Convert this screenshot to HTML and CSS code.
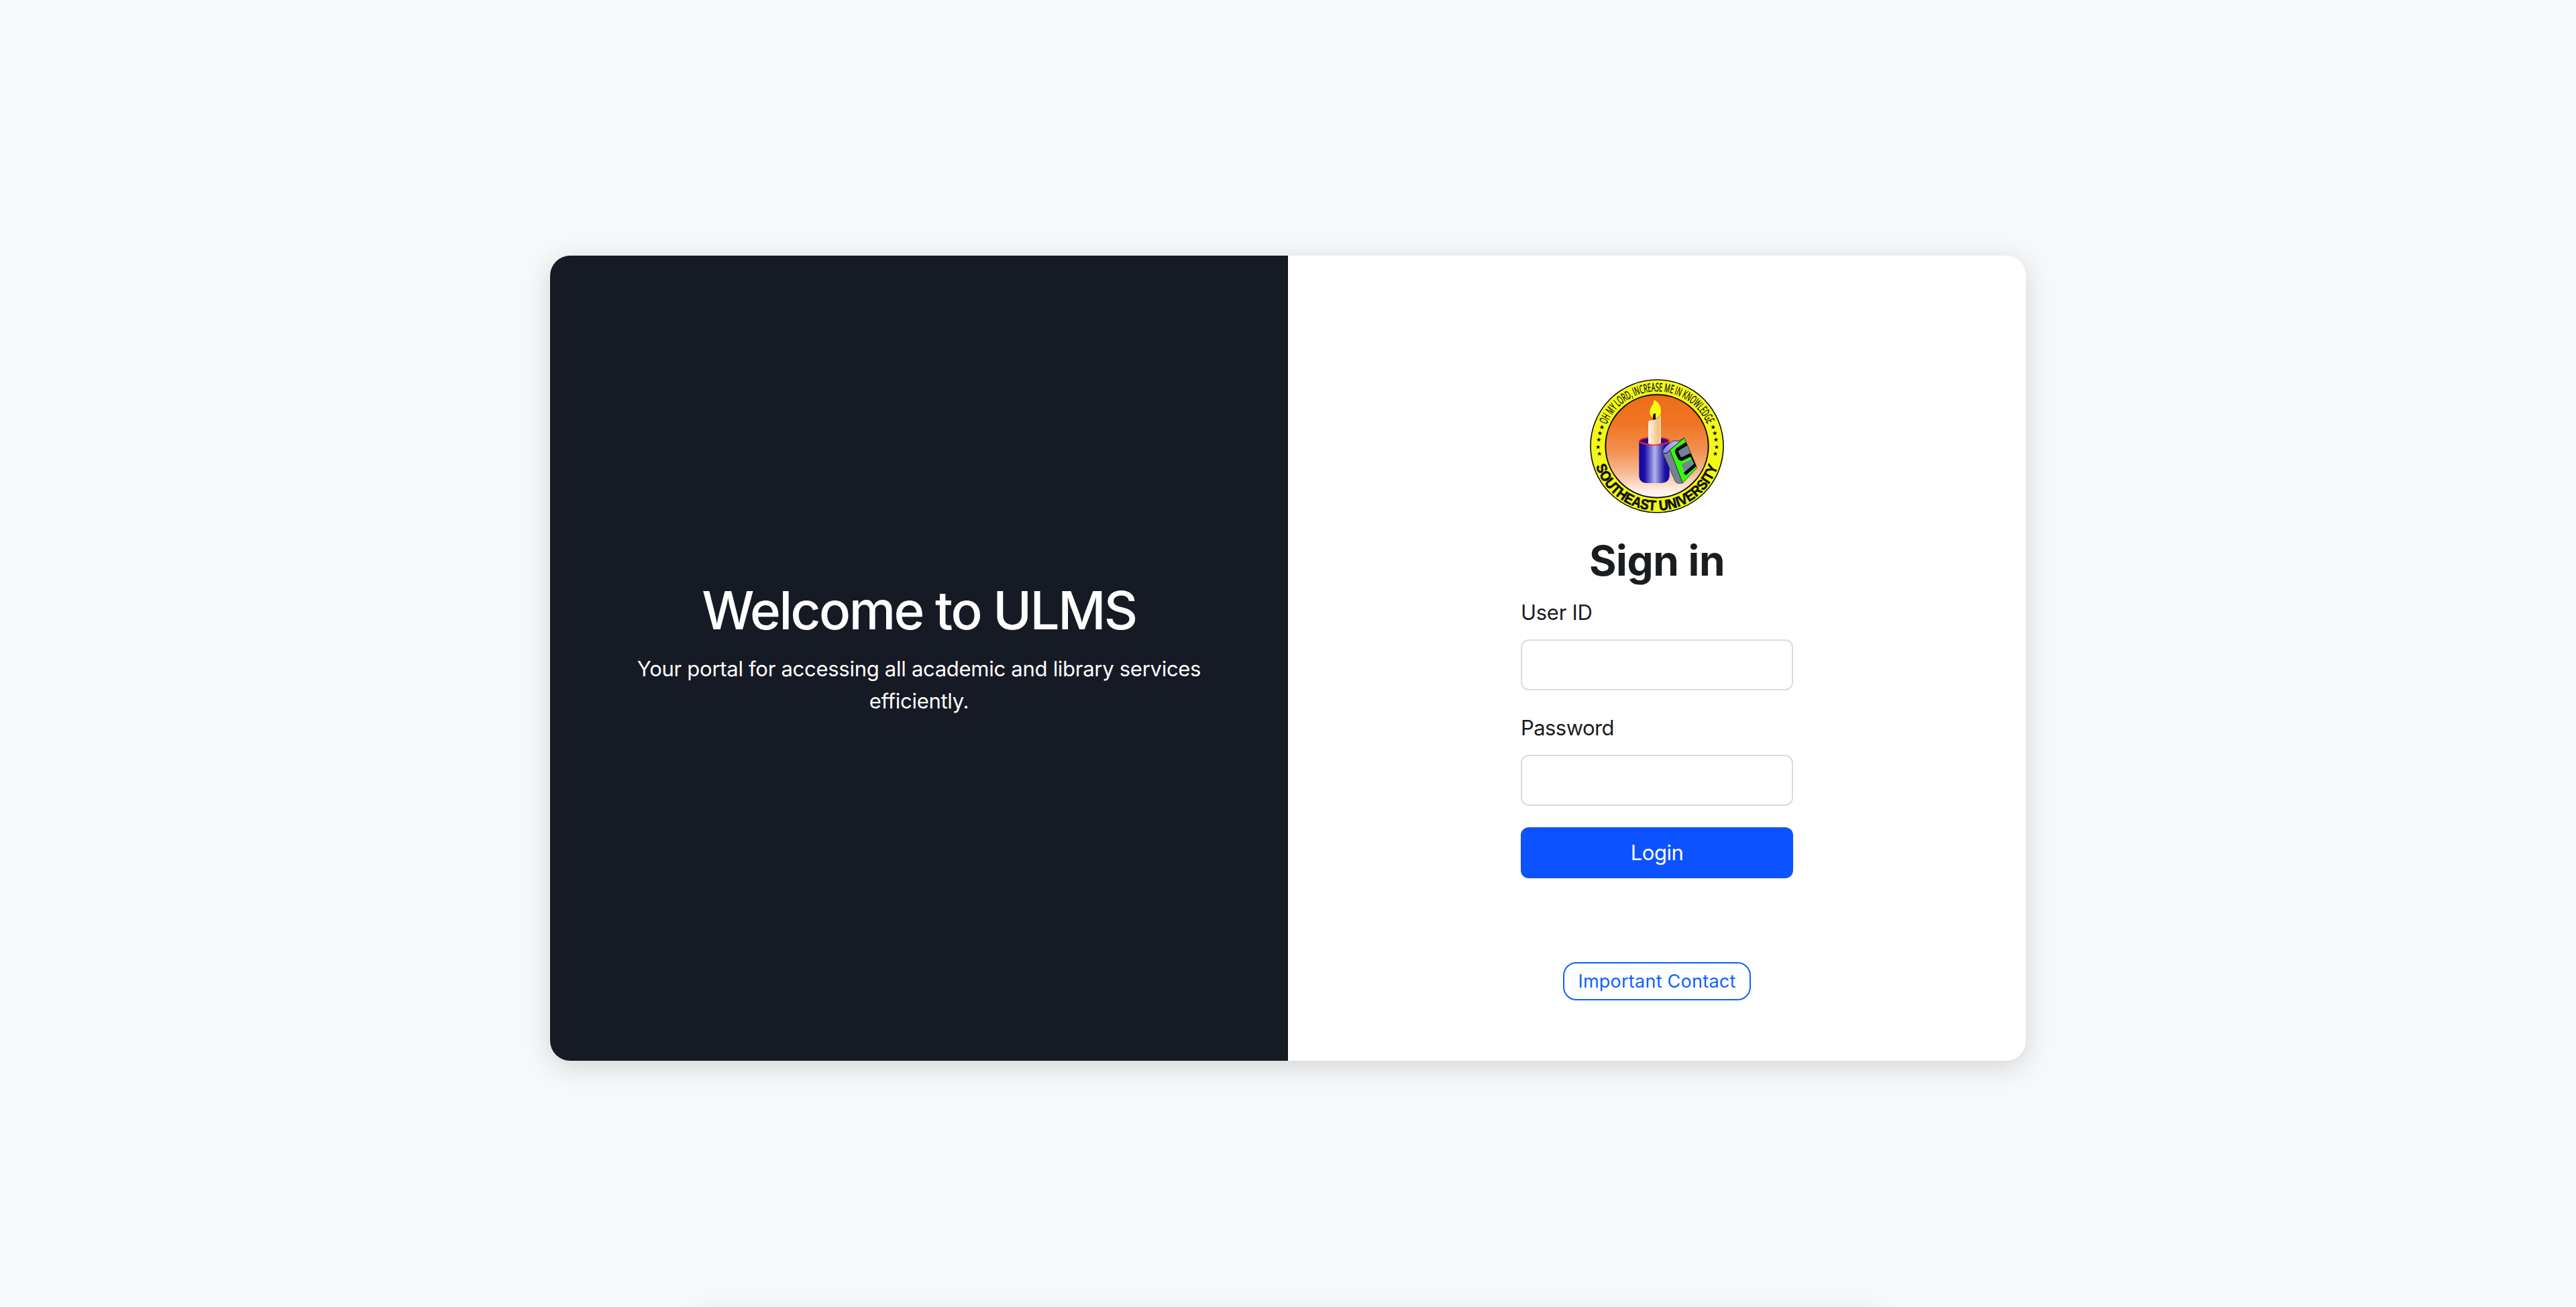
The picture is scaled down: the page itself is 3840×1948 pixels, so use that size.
FILE: index.html
```html
<!DOCTYPE html>
<html lang="en">
<head>
<meta charset="utf-8">
<title>ULMS - Sign in</title>
<link rel="stylesheet" href="styles.css">
</head>
<body>
<main class="card">
  <section class="welcome">
    <h1 class="welcome-title">Welcome to ULMS</h1>
    <p class="welcome-text">Your portal for accessing all academic and library services efficiently.</p>
  </section>
  <section class="signin">
    <svg class="logo" viewBox="60 45 600 600" role="img" aria-label="Southeast University">
      <defs>
        <linearGradient id="sky" x1="0" y1="0" x2="0" y2="1">
          <stop offset="0" stop-color="#ee6c18"/><stop offset=".28" stop-color="#ef7523"/>
          <stop offset=".55" stop-color="#f29151"/><stop offset=".78" stop-color="#f7bf99"/>
          <stop offset=".92" stop-color="#fdebe0"/><stop offset="1" stop-color="#fff8f3"/>
        </linearGradient>
        <linearGradient id="cup">
          <stop offset="0" stop-color="#1205a0"/><stop offset=".18" stop-color="#1a0fa8"/>
          <stop offset=".52" stop-color="#b4b2ec"/><stop offset=".85" stop-color="#1a0fa8"/>
          <stop offset="1" stop-color="#1205a0"/>
        </linearGradient>
        <linearGradient id="wax">
          <stop offset="0" stop-color="#fff4e6"/><stop offset=".45" stop-color="#f9d9b0"/>
          <stop offset=".75" stop-color="#f3c083"/><stop offset="1" stop-color="#f9d5a5"/>
        </linearGradient>
        <linearGradient id="pages">
          <stop offset="0" stop-color="#7d78f0"/><stop offset=".6" stop-color="#b9b6fa"/>
          <stop offset="1" stop-color="#8886bd"/>
        </linearGradient>
        <clipPath id="cover"><path d="M482 308L539 441L475 510L418 362Z"/></clipPath>
        <path id="arc-top" d="M134.5 249A245 245 0 0 1 585.5 249"/>
        <path id="arc-bottom" d="M87 434A287 287 0 0 0 633 434"/>
        <path id="star" d="M0-11 2.8-3.6 10.5-3.4 4.4 1.4 6.5 8.9 0 4.6-6.5 8.9-4.4 1.4-10.5-3.4-2.8-3.6Z"/>
      </defs>
      <circle cx="360" cy="345" r="297" fill="#f3f915" stroke="#111" stroke-width="5"/>
      <circle cx="360" cy="345" r="230" fill="url(#sky)" stroke="#111" stroke-width="6"/>
      <text class="motto"><textPath href="#arc-top" textLength="570" lengthAdjust="spacingAndGlyphs">OH MY LORD, INCREASE ME IN KNOWLEDGE</textPath></text>
      <text class="university"><textPath href="#arc-bottom" textLength="718" lengthAdjust="spacingAndGlyphs">SOUTHEAST UNIVERSITY</textPath></text>
      <g fill="#111">
        <use href="#star" x="114" y="260"/><use href="#star" x="105" y="287"/><use href="#star" x="100" y="316"/><use href="#star" x="97" y="349"/><use href="#star" x="103" y="379"/>
        <use href="#star" x="611" y="260"/><use href="#star" x="619" y="287"/><use href="#star" x="624" y="316"/><use href="#star" x="627" y="349"/><use href="#star" x="621" y="379"/>
      </g>
      <path d="M280 322V478Q282 510 315 510H381Q414 509 416 478V322Z" fill="url(#cup)"/>
      <ellipse cx="348" cy="322" rx="66" ry="17" fill="#23107e" stroke="#f5243c" stroke-width="6"/>
      <path d="M321 334V238Q322 226 342 229Q366 223 378 207V332Q349 342 321 334Z" fill="url(#wax)"/>
      <path d="M347 138C344 165 326 173 328 196C330 211 339 219 351 220C368 220 378 207 378 190C378 166 370 150 347 138Z" fill="#fafa13"/>
      <path d="M342 226V205Q344 198 354 199V225Q347 228 342 226Z" fill="#111"/>
      <path d="M384 371L442 503Q450 515 475 510L418 362Q398 390 384 371Z" fill="#738399" stroke="#222" stroke-width="2"/>
      <path d="M384 371Q395 340 435 321H459L482 308L418 361Q397 388 384 371Z" fill="url(#pages)" stroke="#222" stroke-width="2.5"/>
      <path d="M482 308L539 441L475 510L418 362Z" fill="#35f90f"/>
      <g clip-path="url(#cover)">
        <path d="M453 364L494 335L514 378L467 400Z" fill="#738399"/>
        <path d="M514 404L470 427L484 462L522 437Z" fill="#738399"/>
        <path d="M496 332L453 359Q445 365 449 374L461 398Q465 405 473 402L505 386Q514 382 518 390L530 418Q534 428 526 434L484 470" fill="none" stroke="#080b0a" stroke-width="15"/>
      </g>
      <path d="M482 308L539 441L475 510L418 362Z" fill="none" stroke="#111" stroke-width="2"/>
    </svg>
    <h2 class="signin-title">Sign in</h2>
    <form class="form">
      <label class="label" for="user">User ID</label>
      <input class="input" id="user" type="text">
      <label class="label label-password" for="password">Password</label>
      <input class="input" id="password" type="password">
      <button class="login" type="button">Login</button>
    </form>
    <a class="contact">Important Contact</a>
  </section>
</main>
<footer class="drawer"></footer>
</body>
</html>
```
FILE: styles.css
```css
* { box-sizing: border-box; }
html { overflow: hidden; }
body {
  margin: 0;
  height: 1948px;
  overflow: hidden;
  padding-top: 381px;
  background: #f7f8fa;
  color: #1a1d20;
  font: 31px/48px Inter, "Liberation Sans", sans-serif;
  letter-spacing: -0.28px;
}
.card {
  display: grid;
  grid-template-columns: 1fr 1fr;
  width: 2200px;
  height: 1200px;
  margin: 0 auto;
  border-radius: 30px;
  background: #fff;
  box-shadow: 0 8px 40px rgba(0, 0, 0, 0.15);
}
.welcome {
  display: flex;
  flex-direction: column;
  align-items: center;
  padding: 481px 96px 0;
  border-radius: 30px 0 0 30px;
  background: #161a24;
  color: #fff;
  text-align: center;
}
.welcome-title {
  margin: 0 0 15px;
  font-size: 78px;
  font-weight: 500;
  line-height: 96px;
  letter-spacing: -2.5px;
}
.welcome-text { margin: 0; }
.signin {
  display: flex;
  flex-direction: column;
  align-items: center;
  padding-top: 184px;
}
.logo { width: 200px; height: 200px; }
.motto {
  font: 400 52px "Open Sans", sans-serif;
  letter-spacing: 0;
  fill: #111;
  stroke: #111;
  stroke-width: 1.2px;
}
.university {
  font: 700 64px "Liberation Sans", sans-serif;
  letter-spacing: 0;
  fill: #111;
  stroke: #111;
  stroke-width: 2px;
}
.signin-title {
  margin: 32px 0 15px;
  font-size: 62px;
  font-weight: 700;
  line-height: 77px;
  letter-spacing: -0.43px;
}
.form {
  display: flex;
  flex-direction: column;
  width: 406px;
}
.label-password { margin-top: 32px; letter-spacing: -0.57px; }
.input {
  height: 76px;
  margin-top: 16px;
  padding: 12px 24px;
  border: 2px solid #d8dce1;
  border-radius: 12px;
  background: #fff;
  font: inherit;
}
.login {
  height: 76px;
  margin-top: 32px;
  padding: 0;
  border: 0;
  border-radius: 12px;
  background: #0d52ff;
  color: #fff;
  font: inherit;
  letter-spacing: -0.5px;
}
.contact {
  width: 280px;
  height: 57px;
  margin-top: 125px;
  border: 2px solid #0d62fe;
  border-radius: 20px;
  color: #0d62fe;
  font-size: 27px;
  line-height: 54px;
  letter-spacing: 0.25px;
  text-align: center;
}
/* Only the shadow of the collapsed drawer reaches above the page's lower edge. */
.drawer {
  width: 1680px;
  height: 0;
  margin: 367px auto 0;
  box-shadow: 0 48px 40px 40px rgba(0, 0, 0, 0.08);
}
```
